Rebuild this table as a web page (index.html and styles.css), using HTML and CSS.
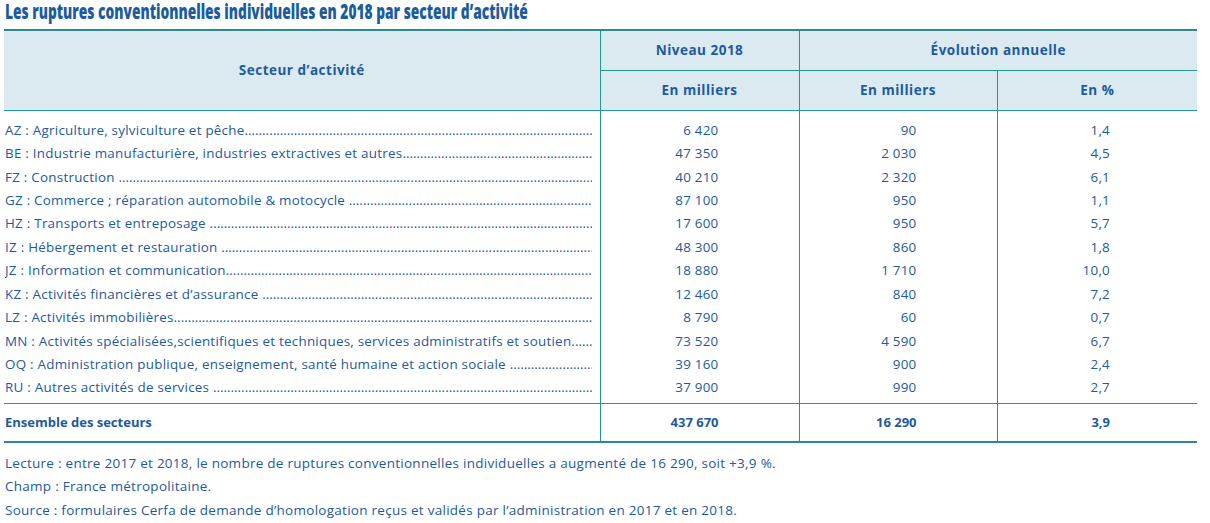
FILE: index.html
```html
<!DOCTYPE html>
<html lang="fr">
<head>
<meta charset="utf-8">
<title>Ruptures conventionnelles 2018</title>
<link rel="stylesheet" href="styles.css">
</head>
<body>
<div class="page">
  <h1 class="title"><span class="title-text">Les ruptures conventionnelles individuelles en 2018 par secteur d’activité</span></h1>
  <table class="data">
    <colgroup>
      <col class="c1"><col class="c2"><col class="c3"><col class="c4">
    </colgroup>
    <thead>
      <tr class="h1">
        <th rowspan="2" class="sector-head">Secteur d’activité</th>
        <th class="bl">Niveau 2018</th>
        <th colspan="2" class="bl">Évolution annuelle</th>
      </tr>
      <tr class="h2">
        <th class="bl">En milliers</th>
        <th class="bl">En milliers</th>
        <th class="bl">En %</th>
      </tr>
    </thead>
    <tbody class="rows">
      <tr class="first"><td class="lab"><div class="leader"><span class="lt">AZ : Agriculture, sylviculture et pêche</span><span class="dots"></span></div></td><td class="n2">6 420</td><td class="n3">90</td><td class="n4">1,4</td></tr>
      <tr><td class="lab"><div class="leader"><span class="lt">BE : Industrie manufacturière, industries extractives et autres</span><span class="dots"></span></div></td><td class="n2">47 350</td><td class="n3">2 030</td><td class="n4">4,5</td></tr>
      <tr><td class="lab"><div class="leader"><span class="lt">FZ : Construction&nbsp;</span><span class="dots"></span></div></td><td class="n2">40 210</td><td class="n3">2 320</td><td class="n4">6,1</td></tr>
      <tr><td class="lab"><div class="leader"><span class="lt">GZ : Commerce ; réparation automobile &amp; motocycle&nbsp;</span><span class="dots"></span></div></td><td class="n2">87 100</td><td class="n3">950</td><td class="n4">1,1</td></tr>
      <tr><td class="lab"><div class="leader"><span class="lt">HZ : Transports et entreposage&nbsp;</span><span class="dots"></span></div></td><td class="n2">17 600</td><td class="n3">950</td><td class="n4">5,7</td></tr>
      <tr><td class="lab"><div class="leader"><span class="lt">IZ : Hébergement et restauration&nbsp;</span><span class="dots"></span></div></td><td class="n2">48 300</td><td class="n3">860</td><td class="n4">1,8</td></tr>
      <tr><td class="lab"><div class="leader"><span class="lt">JZ : Information et communication</span><span class="dots"></span></div></td><td class="n2">18 880</td><td class="n3">1 710</td><td class="n4">10,0</td></tr>
      <tr><td class="lab"><div class="leader"><span class="lt">KZ : Activités financières et d’assurance&nbsp;</span><span class="dots"></span></div></td><td class="n2">12 460</td><td class="n3">840</td><td class="n4">7,2</td></tr>
      <tr><td class="lab"><div class="leader"><span class="lt">LZ : Activités immobilières</span><span class="dots"></span></div></td><td class="n2">8 790</td><td class="n3">60</td><td class="n4">0,7</td></tr>
      <tr><td class="lab"><div class="leader"><span class="lt">MN : Activités spécialisées,scientifiques et techniques, services administratifs et soutien</span><span class="dots"></span></div></td><td class="n2">73 520</td><td class="n3">4 590</td><td class="n4">6,7</td></tr>
      <tr><td class="lab"><div class="leader"><span class="lt">OQ : Administration publique, enseignement, santé humaine et action sociale&nbsp;</span><span class="dots"></span></div></td><td class="n2">39 160</td><td class="n3">900</td><td class="n4">2,4</td></tr>
      <tr class="last"><td class="lab"><div class="leader"><span class="lt">RU : Autres activités de services&nbsp;</span><span class="dots"></span></div></td><td class="n2">37 900</td><td class="n3">990</td><td class="n4">2,7</td></tr>
    </tbody>
    <tbody class="total">
      <tr><td class="lab-total">Ensemble des secteurs</td><td class="n2">437 670</td><td class="n3">16 290</td><td class="n4">3,9</td></tr>
    </tbody>
  </table>
  <div class="notes">
    <p>Lecture : entre 2017 et 2018, le nombre de ruptures conventionnelles individuelles a augmenté de 16 290, soit +3,9 %.</p>
    <p>Champ : France métropolitaine.</p>
    <p>Source : formulaires Cerfa de demande d’homologation reçus et validés par l’administration en 2017 et en 2018.</p>
  </div>
</div>
</body>
</html>
```
FILE: styles.css
```css
* { box-sizing: border-box; }
html, body { margin: 0; padding: 0; background: #ffffff; }
body {
  font-family: "Open Sans", "Liberation Sans", sans-serif;
  color: #1d5aa0;
}
.page { padding: 0 0 0 4px; width: 1197px; }
.title {
  margin: 0 0 0 1px;
  height: 29px;
  font-family: "Open Sans", "Liberation Sans", sans-serif;
  font-weight: 800;
  font-size: 20.5px;
  line-height: 22px;
  color: #1b5c9f;
  white-space: nowrap;
  overflow: visible;
}
.title-text {
  display: inline-block;
  transform: scaleX(0.672);
  transform-origin: 0 50%;
}
.data {
  width: 1193px;
  border-collapse: collapse;
  table-layout: fixed;
  font-size: 13.4px;
  letter-spacing: 0.25px;
  border-top: 2px solid #2b8a8e;
  border-bottom: 2px solid #2b8a8e;
}
.c1 { width: 596px; }
.c2 { width: 199px; }
.c3 { width: 198px; }
.c4 { width: 200px; }
thead th {
  background: #dbeaf0;
  font-weight: bold;
  font-size: 13.5px;
  letter-spacing: 0.5px;
  color: #1d5aa0;
  text-align: center;
  padding: 0;
  height: 40px;
}
.bl { border-left: 1px solid #1f9a8a; }
.h1 th.bl { border-bottom: 1px solid #1f9a8a; }
.h2 th { border-bottom: 1px solid #1f9a8a; }
.sector-head { border-bottom: 1px solid #1f9a8a; }
.rows td {
  height: 23.45px;
  padding: 0;
  line-height: 18px;
  vertical-align: middle;
}
.rows tr.first td { height: 31.45px; padding-top: 8px; }
.rows tr.last td { height: 27.8px; padding-bottom: 4.3px; }
.rows td.lab { padding-left: 1px; padding-right: 8px; }
.leader { display: flex; white-space: nowrap; overflow: hidden; }
.lt { flex: none; }
.dots { flex: 1 1 auto; overflow: hidden; min-width: 0; letter-spacing: 0; }
.dots::after {
  content: "....................................................................................................................................................................................................................................................";
}
.n2, .n3, .n4 { text-align: right; border-left: 1px solid #1f9a8a; }
.rows td.n2, .total td.n2 { padding-right: 80px; }
.rows td.n3, .total td.n3 { padding-right: 80px; }
.rows td.n4, .total td.n4 { padding-right: 87px; }
.total td {
  height: 38px;
  padding: 0;
  font-weight: bold;
  font-size: 13px;
  letter-spacing: 0;
  border-top: 1px solid #1f9a8a;
  vertical-align: middle;
}
.total td.lab-total { padding-left: 1px; }
.notes { padding: 11px 0 0 1px; font-size: 13.5px; letter-spacing: 0.27px; }
.notes p { margin: 0; height: 23.5px; line-height: 18px; }
```
